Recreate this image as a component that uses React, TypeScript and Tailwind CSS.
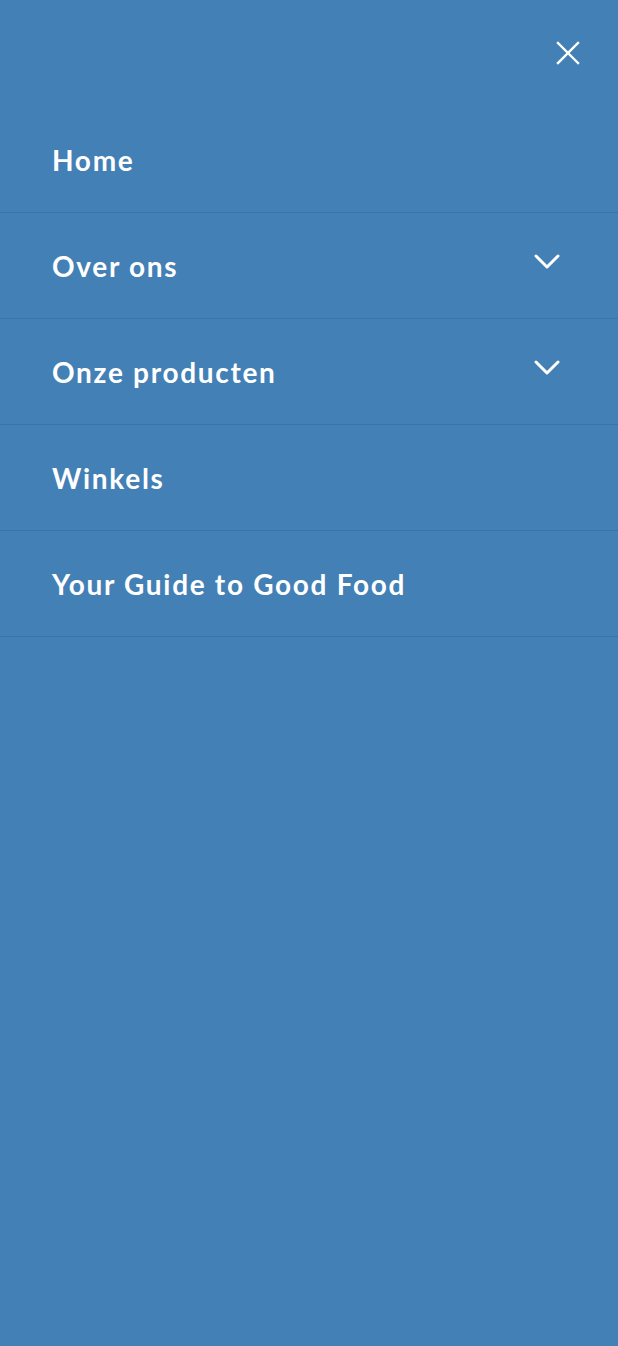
import React from "react";

const items = [
  { label: "Home", sub: false },
  { label: "Over ons", sub: true },
  { label: "Onze producten", sub: true },
  { label: "Winkels", sub: false },
  { label: "Your Guide to Good Food", sub: false },
];

const Chevron = () => (
  <svg width="26" height="16" viewBox="0 0 26 16" fill="none" stroke="white" strokeWidth="3" strokeLinecap="round" strokeLinejoin="round">
    <path d="M2 2l11 11L24 2" />
  </svg>
);

export default function App() {
  return (
    <div className="min-h-[1346px] w-full bg-[#4380b5] text-white font-['Lato',sans-serif]">
      {/* Header */}
      <div className="h-[107px] flex justify-end items-start pt-[41px] pr-[38px]">
        <button aria-label="Sluiten">
          <svg width="24" height="24" viewBox="0 0 24 24" stroke="white" strokeWidth="2.4" strokeLinecap="square">
            <path d="M2 2l20 20M22 2L2 22" />
          </svg>
        </button>
      </div>

      {/* Nav */}
      <nav>
        <ul>
          {items.map((item) => (
            <li
              key={item.label}
              className="h-[106px] border-b border-[#3b74a6] flex items-center justify-between pl-[52px] pr-[58px]"
            >
              <a href="#" className="text-[28px] font-bold leading-none tracking-[1.7px]">
                {item.label}
              </a>
              {item.sub && (
                <span className="-mt-2">
                  <Chevron />
                </span>
              )}
            </li>
          ))}
        </ul>
      </nav>
    </div>
  );
}
